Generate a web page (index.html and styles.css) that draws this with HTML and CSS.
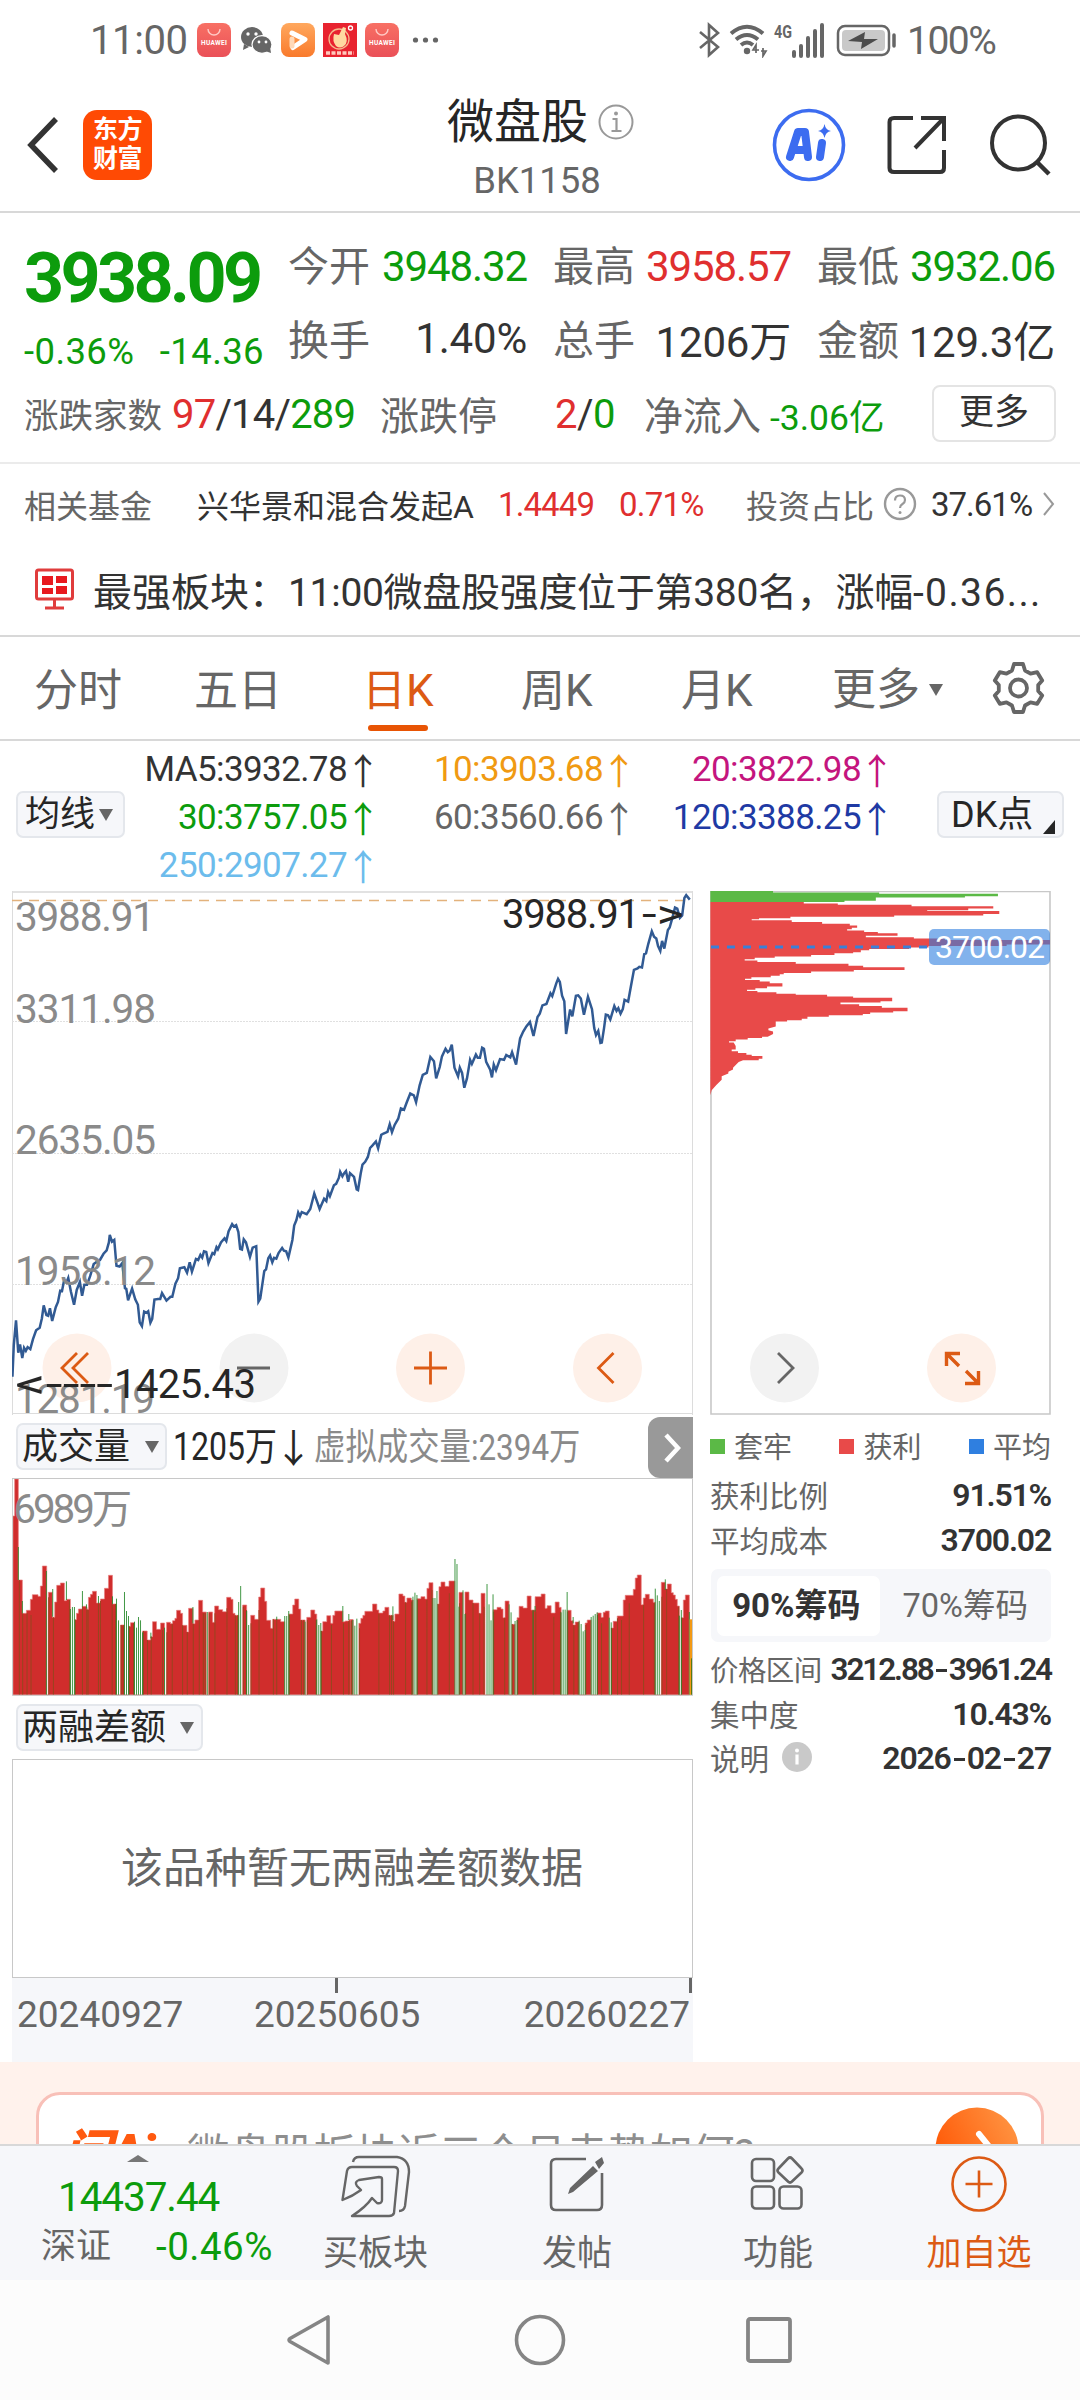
FILE: index.html
```html
<!DOCTYPE html>
<html lang="zh-CN">
<head>
<meta charset="utf-8">
<title>微盘股 BK1158</title>
<link rel="stylesheet" href="styles.css">
</head>
<body>
<div class="screen">

<div class="status">
  <span class="clock">11:00</span>
  <svg class="notif" width="242" height="36" viewBox="0 0 242 36">
    <defs>
      <linearGradient id="hw" x1="0" y1="0" x2="0" y2="1"><stop offset="0" stop-color="#f87064"/><stop offset="1" stop-color="#ea5058"/></linearGradient>
      <linearGradient id="vid" x1="0" y1="0" x2="0" y2="1"><stop offset="0" stop-color="#ffa85e"/><stop offset="1" stop-color="#f97a2c"/></linearGradient>
    </defs>
    <g id="hwapp"><rect x="0" y="1" width="34" height="34" rx="8" fill="url(#hw)"/><path d="M11 7a6 6 0 0 0 12 0" fill="none" stroke="#ffc9c4" stroke-width="1.4"/><text x="4" y="23" class="hwtxt" textLength="26">HUAWEI</text></g>
    <g fill="#666"><ellipse cx="55" cy="15" rx="11" ry="10"/><path d="M47 22l-1 6 6-3z"/></g>
    <g fill="#666" stroke="#fff" stroke-width="1.2"><ellipse cx="65" cy="22.500" rx="10" ry="8.800"/></g>
    <path d="M68 29l6 2-1-6z" fill="#666"/>
    <g fill="#fff"><circle cx="51" cy="12" r="1.700"/><circle cx="59" cy="12" r="1.700"/><circle cx="62" cy="20" r="1.400"/><circle cx="69" cy="20" r="1.400"/></g>
    <rect x="84" y="1" width="34" height="34" rx="8" fill="url(#vid)"/>
    <path d="M95 11L108 17.500 96 25.500" fill="none" stroke="#fff" stroke-width="5" stroke-linecap="round" stroke-linejoin="round"/>
    <path d="M95 17v7" stroke="#ffd9b8" stroke-width="5" stroke-linecap="round"/>
    <rect x="126" y="1" width="34" height="34" fill="#e8232f"/>
    <circle cx="142" cy="17" r="10" fill="none" stroke="#f5b98c" stroke-width="1.300"/>
    <path d="M137 12l5 1 4-8 3 1-1 6q4 8-1 12-4 3-8 0-4-5-2-12z" fill="#ffd9a0"/>
    <circle cx="153.500" cy="6" r="2" fill="none" stroke="#fff" stroke-width="1.300"/>
    <path d="M129 31h28" stroke="#ffc9bd" stroke-width="3.500" stroke-dasharray="4 1.500"/>
    <use href="#hwapp" x="168"/>
    <g fill="#666"><circle cx="218.500" cy="18" r="2.600"/><circle cx="228.500" cy="18" r="2.600"/><circle cx="238.500" cy="18" r="2.600"/></g>
  </svg>
  <svg class="signals" width="204" height="36" viewBox="0 0 204 36">
    <g fill="none" stroke="#666" stroke-width="2.600">
      <path d="M3 10l18 15-9 8V3l9 8L3 26"/>
      <path d="M34 11.500q16-13.500 32 0" stroke-width="4"/><path d="M39 17.500q11-9 22 0" stroke-width="4"/><path d="M44 23q6-5 12 0" stroke-width="4"/>
    </g>
    <circle cx="50" cy="29" r="3.200" fill="#666"/>
    <path d="M59 31v-8l-3 5h6M66 26v8l3-5h-5" fill="none" stroke="#666" stroke-width="1.700"/>
    <text x="77" y="16" class="g4" textLength="18" lengthAdjust="spacingAndGlyphs">4G</text>
    <path d="M97 34v-4M104 34V24M111 34V16M118 34V9M125 34V3" stroke="#666" stroke-width="4" stroke-linecap="round"/>
    <rect x="141" y="4" width="51" height="29" rx="7" fill="#fff" stroke="#666" stroke-width="2.500"/>
    <rect x="145" y="8" width="43" height="21" rx="4" fill="#c9c9c9"/>
    <path d="M151 19l17-9-1 7 14 0-17 10 1-7z" fill="#4c4c4c"/>
    <path d="M197 13v11" stroke="#666" stroke-width="3.500" stroke-linecap="round"/>
  </svg>
  <span class="pct">100%</span>
</div>

<header class="head">
  <svg class="back" width="32" height="56" viewBox="0 0 32 56"><path d="M29 2L4 28l25 26" fill="none" stroke="#333" stroke-width="5.500"/></svg>
  <div class="logo">东方<br>财富</div>
  <div class="title">
    <div class="name">微盘股<svg width="38" height="38" viewBox="0 0 38 38"><circle cx="19" cy="19" r="16.500" fill="none" stroke="#999" stroke-width="2"/><path d="M15.500 16h4v12m-5 0h10" fill="none" stroke="#999" stroke-width="2.200"/><circle cx="19" cy="10.500" r="2" fill="#999"/></svg></div>
    <div class="code">BK1158</div>
  </div>
  <svg class="ai" width="74" height="74" viewBox="0 0 74 74"><circle cx="37" cy="37" r="34.500" fill="none" stroke="#3c6cf0" stroke-width="3.600"/><path d="M18 49L26 24h7l3 25M21 42h13M50 35l-2 14" fill="none" stroke="#3c6cf0" stroke-width="8" stroke-linejoin="round" stroke-linecap="round"/><path d="M52.500 16q1 6 6.500 7-5.500 1-6.500 7-1-6-6.500-7 5.500-1 6.500-7z" fill="#3c6cf0"/></svg>
  <svg class="share" width="62" height="62" viewBox="0 0 62 62"><path d="M27 4H8q-4.500 0-4.500 4v46q0 4 4.500 4h46q4 0 4-4V36" fill="none" stroke="#333" stroke-width="4"/><path d="M35 4h23v23M58 4L29 34" fill="none" stroke="#333" stroke-width="4"/></svg>
  <svg class="search" width="62" height="62" viewBox="0 0 62 62"><circle cx="29.500" cy="29" r="26.500" fill="none" stroke="#333" stroke-width="4"/><path d="M48 48l12 12" stroke="#333" stroke-width="4.500"/></svg>
</header>

<section class="quote">
  <div class="price"><b>3938.09</b><div class="chg"><span>-0.36%</span><span>-14.36</span></div></div>
  <div class="grid">
    <div><i>今开</i><span class="gr">3948.32</span></div><div><i>最高</i><span class="rd">3958.57</span></div><div><i>最低</i><span class="gr">3932.06</span></div>
    <div class="w"><i>换手</i><span>1.40%</span></div><div class="w"><i>总手</i><span>1206万</span></div><div class="w"><i>金额</i><span>129.3亿</span></div>
  </div>
</section>
<section class="breadth">
  <i class="b1">涨跌家数</i><span class="b2"><em class="rd">97</em>/14/<em class="gr">289</em></span>
  <i class="b3">涨跌停</i><span class="b4"><em class="rd">2</em>/<em class="gr">0</em></span>
  <i class="b5">净流入</i><span class="b6 gr">-3.06亿</span><span class="more">更多</span>
</section>
<section class="fund">
  <span class="f1">相关基金</span><span class="f2">兴华景和混合发起A</span><span class="f3 rd">1.4449</span><span class="f4 rd">0.71%</span><span class="f5">投资占比</span>
  <svg class="f6" width="34" height="34" viewBox="0 0 34 34"><circle cx="17" cy="17" r="15" fill="none" stroke="#999" stroke-width="2.400"/><path d="M12 13.500q0-5 5-5t5 4.500q0 2.500-2.500 4T17 21" fill="none" stroke="#999" stroke-width="2.200"/><circle cx="17" cy="25.500" r="1.500" fill="#999"/></svg>
  <span class="f7">37.61%</span>
  <svg class="f8" width="12" height="24" viewBox="0 0 12 24"><path d="M1 1l9 11-9 11" fill="none" stroke="#999" stroke-width="2"/></svg>
</section>
<section class="news">
  <svg width="40" height="42" viewBox="0 0 40 42"><rect x="1.500" y="2" width="36" height="29" rx="2" fill="none" stroke="#e03c3c" stroke-width="3"/><path d="M7 8h11v9H7zM21 8h11v7H21zM7 20h11v6H7zM21 18h11v8H21z" fill="#e8191f"/><path d="M19.500 32v7M10 40h19" stroke="#e03c3c" stroke-width="3"/></svg>
  <span class="n1">最强板块：</span><span class="n2">11:00微盘股强度位于第380名，涨幅<em>-0.36...</em></span>
</section>

<nav class="tabs">
  <span>分时</span><span>五日</span><span class="on">日K</span><span>周K</span><span>月K</span><span class="mo">更多<s></s></span>
  <svg width="54" height="54" viewBox="0 0 54 54" fill="none" stroke="#666" stroke-width="3.800" stroke-linejoin="round"><path d="M22 3h9l2 6.500 5.500 3.200 6.700-1.500 5 8.300-4 4.500v6l4 4.500-5 8.300-6.700-1.500-5.500 3.200L31 51h-9l-2-6.500-5.500-3.200-6.700 1.500-5-8.300 4-4.500v-6l-4-4.500 5-8.300 6.700 1.500L20 9.500z"/><circle cx="26.500" cy="27" r="8.500"/></svg>
</nav>

<section class="ma">
  <span class="btn avg">均线<s></s></span>
  <div class="mas">
    <span>MA5:3932.78<u>↑</u></span><span class="c10">10:3903.68<u>↑</u></span><span class="c20">20:3822.98<u>↑</u></span>
    <span class="gr">30:3757.05<u>↑</u></span><span class="c60">60:3560.66<u>↑</u></span><span class="c120">120:3388.25<u>↑</u></span>
    <span class="c250">250:2907.27<u>↑</u></span>
  </div>
  <span class="btn dk">DK点<s></s></span>
</section>

<main class="charts">
  <div class="left">
    <svg class="kline" width="681" height="524" viewBox="0 0 681 524">
      <path d="M0 1H681" stroke="#e2e2e2" stroke-width="2"/><path d="M.5 0V524M680.500 0V524M0 522.500H681" stroke="#dcdcdc" fill="none"/>
      <path d="M0 130.500H680M0 262.500H680M0 393.500H680" stroke="#e0e0e0" stroke-dasharray="2 1"/>
      <path d="M0 9.500H680" stroke="#e3b27c" stroke-width="1.300" stroke-dasharray="10 7"/>
      <svg width="680" height="524" viewBox="27 32 1523 1521" preserveAspectRatio="none">
        <polyline fill="none" stroke="#315a93" stroke-width="2.500" vector-effect="non-scaling-stroke" points="28,1442 31,1350 36,1278 41,1372 45,1348 50,1388 54,1358 58,1367 62,1356 68,1362 74,1333 81,1307 89,1300 94,1272 98,1235 104,1263 108,1265 112,1243 117,1280 125,1240 130,1225 135,1192 139,1193 144,1160 149,1168 153,1155 159,1195 166,1233 172,1190 179,1167 184,1207 189,1175 195,1175 202,1150 210,1115 217,1108 224,1103 232,1085 239,1075 244,1052 246,1030 251,1050 256,1045 261,1120 268,1122 274,1112 280,1185 283,1187 287,1220 296,1186 303,1217 309,1233 313,1284 318,1295 323,1253 328,1256 332,1252 337,1285 341,1274 346,1218 354,1216 359,1216 363,1199 373,1221 382,1210 386,1210 393,1172 399,1156 403,1127 413,1124 419,1140 425,1110 430,1137 439,1100 444,1103 449,1088 453,1096 457,1078 462,1080 467,1112 476,1083 480,1086 485,1066 488,1072 495,1052 503,1040 507,1048 512,1020 520,999 524,1006 529,1002 534,1022 538,1071 542,1073 546,1043 551,1052 560,1094 566,1067 574,1063 579,1224 583,1215 592,1135 596,1130 601,1098 605,1090 610,1110 614,1097 619,1099 624,1083 632,1068 636,1076 641,1078 646,1096 655,1045 659,1003 664,987 668,965 672,976 676,964 687,970 695,955 704,910 716,955 726,925 731,932 735,906 739,918 748,886 753,882 759,865 762,847 767,860 771,851 775,845 780,876 784,851 793,862 799,898 802,900 808,852 812,826 818,818 824,804 829,778 834,771 842,759 847,779 854,740 859,736 868,731 873,709 878,732 884,711 892,693 898,663 905,667 911,646 919,620 927,625 932,645 940,596 947,566 956,560 964,514 972,526 977,576 985,543 990,512 998,490 1003,500 1007,496 1012,478 1018,545 1026,570 1030,545 1035,560 1040,603 1046,576 1053,522 1057,534 1066,507 1070,516 1075,516 1080,487 1084,490 1089,528 1098,551 1102,573 1106,536 1111,552 1120,520 1129,522 1134,508 1143,515 1147,500 1156,536 1160,500 1165,460 1172,440 1179,425 1187,412 1195,453 1204,398 1209,388 1215,364 1224,360 1233,329 1237,337 1246,300 1250,287 1254,296 1259,336 1264,352 1268,447 1277,376 1282,396 1290,336 1295,335 1301,344 1308,391 1317,339 1326,375 1331,430 1335,450 1340,438 1345,473 1348,472 1353,430 1357,391 1362,393 1367,405 1376,366 1381,380 1385,372 1390,388 1395,375 1399,348 1407,353 1413,310 1420,261 1428,257 1432,252 1438,254 1443,215 1447,213 1452,186 1460,149 1465,165 1470,170 1474,192 1479,206 1483,177 1488,199 1496,145 1500,138 1506,110 1512,80 1517,83 1523,110 1528,103 1533,52 1537,44 1545,57"/>
      </svg>
      <g class="knob"><circle cx="65" cy="477" r="34.500" fill="#fef0e8"/><circle cx="242" cy="477" r="34.500" fill="#f2f2f2"/><circle cx="418.500" cy="477" r="34.500" fill="#fef0e8"/><circle cx="595.500" cy="477" r="34.500" fill="#fef0e8"/></g>
      <g class="axis"><text x="3" y="40" textLength="140">3988.91</text><text x="3" y="132" textLength="141">3311.98</text><text x="3" y="263" textLength="141">2635.05</text><text x="3" y="394" textLength="141">1958.12</text><text x="3" y="522" textLength="140">1281.19</text></g>
      <path d="M65 462L50 477l15 15M76 462L61 477l15 15M402 477h33M418.500 460.500v33M601.500 462l-15 15 15 15" fill="none" stroke="#dc5a14" stroke-width="2.800"/>
      <path d="M225 477h33" stroke="#666" stroke-width="3"/>
      <g class="mark"><text x="490" y="37" textLength="138">3988.91</text><text x="630" y="37" textLength="42" lengthAdjust="spacingAndGlyphs">-&gt;</text><text x="3" y="507" textLength="98" lengthAdjust="spacingAndGlyphs">&lt;----</text><text x="102" y="507" textLength="142">1425.43</text></g>
    </svg>

    <div class="volhead"><span class="btn vol">成交量<s></s></span><span class="v1">1205万</span><span class="v1a">↓</span><span class="v2">虚拟成交量:2394万</span>
      <span class="fold"><svg width="18" height="32" viewBox="0 0 18 32"><path d="M3 3l12 13L3 29" fill="none" stroke="#fff" stroke-width="4.500"/></svg></span></div>

    <svg class="volume" width="681" height="218" viewBox="12 24 2040 654" preserveAspectRatio="none">
      <g>
        <path fill="#d02d2c" stroke="#e88080" stroke-width="2" d="M15 675V138H20V27H31V330H43V430H55V421H67V388H73V374H90V379H97V348H103V288H116V675H121V367H133V442H140V396H146V346H157V339H169V392H175V388H187V675H200V449H205V430H211V417H223V409H235V418H241V382H247V373H253V364H265V399H277V387H289V355H301V316H313V402H325V675H337V465H349V675H361V469H367V458H379V675H403V483H417V510H428V500H433V455H445V478H457V459H469V675H475V457H487V461H493V452H500V445H505V421H517V430H523V466H536V486H541V415H554V461H560V450H571V391H583V426H594V675H601V426H613V457H619V408H631V419H643V425H655V382H668V388H674V430H680V436H691V675H703V405H715V675H727V436H739V448H751V381H757V354H769V394H775V451H787V475H793V448H817V455H829V675H841V432H853V405H859V387H871V417H877V450H890V675H895V442H907V420H919V432H925V675H937V483H943V455H955V437H967V460H973V436H979V423H1003V455H1010V453H1021V449H1034V675Z"/>
        <path stroke="#98451f" stroke-width="3" fill="none" d="M34 330V675M44 430V675M57 430V675M69 435V675M122 382V675M136 442V675M184 390V675M202 449V675M223 409V675M236 412V675M240 420V675M271 400V675M277 393V675M312 402V675M322 402V675M339 465V675M345 465V675M363 469V675M376 460V675M406 483V675M418 510V675M429 500V675M463 480V675M476 487V675M492 461V675M523 466V675M537 486V675M555 461V675M573 450V675M585 430V675M591 430V675M603 430V675M620 430V675M656 415V675M681 436V675M688 436V675M705 410V675M714 420V675M728 460V675M752 420V675M795 448V675M805 448V675M843 435V675M879 450V675M886 450V675M897 450V675M923 450V675M939 483V675M969 465V675M1005 460V675M1021 453V675"/>
        <path stroke="#25882a" stroke-width="2.600" fill="none" d="M31 231V330M43 393V430M115 303V675M134 357V440M175 334V390M187 417V675M193 411V675M199 411V675M223 363V410M235 403V415M271 378V400M313 379V402M325 386V675M331 451V675M349 366V675M355 423V675M361 438V675M379 455V675M385 473V675M391 441V675M397 451V675M403 487V675M428 488V505M469 473V675M554 411V460M597 426V675M691 396V675M697 348V675M715 423V675M721 465V675M805 440V450M829 438V675M835 438V675M841 423V675M890 455V675M925 448V675M931 465V675M937 459V675M1003 408V455M1021 432V450"/>
      </g>
      <g transform="translate(1026)">
        <path fill="#d02d2c" stroke="#e88080" stroke-width="2" d="M0 675V449H7V675H25V460H31V445H37V436H43V424H66V402H79V420H85V429H97V423H103V412H115V436H128V454H133V432H145V372H157V378H163V397H169V384H182V390H188V675H199V386H211V380H223V387H229V355H235V338H247V675H261V402H265V350H271V336H283V349H295V333H313V675H325V367H337V675H343V366H355V390H367V399H385V430H391V370H403V675H427V419H439V412H451V417H457V443H463V393H475V675H483V463H493V675H499V443H505V409H517V414H529V378H541V420H553V380H571V372H583V415H589V407H601V429H613V396H625V412H631V675H649V421H661V452H667V465H673V456H685V675H703V459H709V450H721V675H739V429H751V442H757V427H763V423H775V675H781V474H787V454H799V438H817V390H823V376H847V358H853V324H859V315H871V404H877V384H883V373H895V387H907V397H913V675H931V337H943V357H949V342H961V368H967V375H973V388H979V408H985V675H991V443H997V390H1003V375H1015V675Z"/>
        <path stroke="#98451f" stroke-width="3" fill="none" d="M2 452V675M27 475V675M85 432V675M117 436V675M123 436V675M129 454V675M165 397V675M183 395V675M201 390V675M229 390V675M244 360V675M262 402V675M296 370V675M327 400V675M345 430V675M367 399V675M387 430V675M400 410V675M429 425V675M462 443V675M485 463V675M501 450V675M547 422V675M555 425V675M609 440V675M629 425V675M651 425V675M669 465V675M682 456V675M705 465V675M740 435V675M752 460V675M782 474V675M800 445V675M812 450V675M835 400V675M878 404V675M910 400V675M933 380V675M947 357V675M983 410V675M992 443V675"/>
        <path stroke="#25882a" stroke-width="2.600" fill="none" d="M7 450V675M13 467V675M19 446V675M127 409V450M187 380V675M193 368V675M199 375V675M247 384V675M253 384V675M259 363V675M313 267V675M319 282V675M325 410V675M337 361V675M343 432V675M409 342V675M415 403V675M421 451V675M427 373V675M475 403V675M481 427V675M493 453V675M499 450V675M553 408V425M547 420V675M631 427V675M637 419V675M643 419V675M649 366V675M667 441V460M685 452V675M691 462V675M697 484V675M703 480V675M721 441V675M727 437V675M733 432V675M739 427V675M775 443V675M781 457V675M913 356V675M919 376V675M925 393V675M943 328V360M985 437V675M991 420V675M1015 426V675"/>
        <path d="M1016 448H1026V675H1016z" fill="#f39a14"/><path d="M1022 565V675" stroke="#5a7a10" stroke-width="4"/>
      </g>
      <path d="M13 25.500H2050.500V676H13.500Z" fill="none" stroke="#c8c8c8" stroke-width="3"/>
      <text class="vlab" x="16" y="159" textLength="356">6989万</text>
    </svg>

    <div class="lrhead"><span class="btn lr">两融差额<s></s></span></div>
    <div class="empty">该品种暂无两融差额数据</div>
    <div class="dates"><span>20240927</span><span>20250605</span><span>20260227</span></div>
  </div>

  <div class="right">
    <svg class="chips" width="341" height="524" viewBox="0 0 341 524">
      <path d="M1 .5H340V523H1Z" fill="none" stroke="#c8c8c8" stroke-width="1.600"/>
      <svg width="341" height="524" viewBox="61 32 1022 1521" preserveAspectRatio="none">
        <path fill="#5bb946" d="M62 32H250V36H568V40H924V47H825V51H558V60H464V64H62Z"/>
        <path fill="#e84a49" d="M62 64H342V68H444V72H665V76H910V83H835V88H712V90H928V99H880V103H613V107H302V111H208V114H186V117H306V122H397V127H480V132H502V139H486V143H472V147H523V151H564V155H623V162H528V166H672V170H765V174H1080V187H950V192H716V196H658V200H538V204H513V210H490V213H434V218H364V222H255V226H195V230H165V234H203V238H318V243H476V249H520V253H644V261H492V266H364V270H282V274H270V278H243V282H185V287H166V290H210V295H240V300H278V309H232V314H197V319H172V322H203V326H260V330H318V333H412V338H490V342H607V352H572V356H452V361H508V366H576V371H653V381H610V385H541V389H519V393H417V397H353V403H336V407H292V411H258V425L236 431V436L250 440V447L234 455H217V459H174V463H138V468H118V472H132L138 482V492H126V497H145V502H170V507H186V511H218V519H207V523H160L147 528 130 545V550L116 557V562L96 570V580L80 595 66 610 62 625Z"/>
      </svg>
      <path d="M1 56H220" stroke="#3a80d8" stroke-width="3" stroke-dasharray="8 8"/>
      <rect x="219" y="38" width="121" height="36" rx="5" fill="#2f7fe0" fill-opacity=".6"/>
      <text class="avgp" x="225" y="66.500" textLength="110">3700.02</text>
      <circle cx="74.500" cy="477" r="34.500" fill="#f2f2f2"/><path d="M68 462l15 15-15 15" fill="none" stroke="#666" stroke-width="2.800"/>
      <circle cx="251.500" cy="477" r="34.500" fill="#fef0e8"/><path d="M250 462.500h-13.500V475M237 463l12 12M255 492.500h13.500V480M268 492l-12-12" fill="none" stroke="#dc5a14" stroke-width="3.400"/>
    </svg>
    <div class="legend"><span><s class="lg"></s>套牢</span><span><s class="lred"></s>获利</span><span><s class="lb"></s>平均</span></div>
    <div class="row r1"><i>获利比例</i><b>91.51%</b></div>
    <div class="row"><i>平均成本</i><b>3700.02</b></div>
    <div class="toggle"><span class="sel">90%筹码</span><span>70%筹码</span></div>
    <div class="row"><i class="tight">价格区间</i><b class="range">3212.88<q></q>3961.24</b></div>
    <div class="row"><i>集中度</i><b>10.43%</b></div>
    <div class="row"><i>说明<svg width="30" height="30" viewBox="0 0 30 30"><circle cx="15" cy="15" r="15" fill="#c9c9c9"/><path d="M15 12.500v10" stroke="#fff" stroke-width="3.200"/><circle cx="15" cy="8.500" r="2" fill="#fff"/></svg></i><b>2026<q></q>02<q></q>27</b></div>
  </div>
</main>

<section class="ask"><div class="askbox"><span class="asklogo">问Ai</span><span class="askq">微盘股板块近三个月走势如何?</span><svg width="84" height="84" viewBox="0 0 84 84"><defs><linearGradient id="og" x1="0" y1=".5" x2="1" y2="0"><stop offset="0" stop-color="#ff5a08"/><stop offset="1" stop-color="#ff9a48"/></linearGradient></defs><circle cx="42" cy="42" r="41.500" fill="url(#og)"/><path d="M44 27l13 16-13 15M26 43h30" fill="none" stroke="#fff" stroke-width="6" stroke-linecap="round"/></svg></div></section>

<footer class="bottom">
  <div class="index"><s></s><div class="ip gr">14437.44</div><div class="ic"><span>深证</span><span class="gr">-0.46%</span></div></div>
  <div class="act a1"><svg width="70" height="63" viewBox="0 0 70 63" fill="none" stroke="#666" stroke-width="2.400" stroke-linejoin="round"><path d="M12 7q1-5 6-5h38q12 2 12 15l-4 34q-1 5-6 5"/><path d="M1.500 45L6 16q1-4 5-4h42q4 0 4 4l-4 42q-1 3-5 3H11q14-9 20-18l5 5q5 1 5-3V24q0-2-3-2l-20 3q-5 2-2 6l4 4q-8 6-18.500 10z"/></svg>买板块</div>
  <div class="act a2"><svg width="58" height="58" viewBox="0 0 58 58" fill="none" stroke="#666"><path d="M38 3H8Q3 3 3 8v41q0 5 5 5h41q5 0 5-5V17" stroke-width="2.600"/><path d="M47 6l7-5 2 6-5 6zM45 10l5 5-25 21-5 2 2-6z" fill="#666" stroke="none"/></svg>发帖</div>
  <div class="act a3"><svg width="56" height="56" viewBox="0 0 56 56" fill="none" stroke="#666" stroke-width="2.600"><rect x="2" y="3" width="22" height="22" rx="4"/><path d="M38 2.500q2-2 4 0l9.500 10q2 2 0 4l-9.500 9q-2 2-4 0l-9.500-9q-2-2 0-4z"/><rect x="2" y="30.500" width="22" height="22" rx="4"/><rect x="29.500" y="30.500" width="22" height="22" rx="4"/></svg>功能</div>
  <div class="act a4"><svg width="58" height="58" viewBox="0 0 58 58" fill="none" stroke="#dc5a14" stroke-width="2.600"><circle cx="29" cy="29" r="26.500"/><path d="M29 15.500v27M15.500 29h27"/></svg>加自选</div>
</footer>

<div class="sysnav">
  <svg width="46" height="54" viewBox="0 0 46 54"><path d="M42 4v46L4 28.500q-2-1.500 0-3z" fill="none" stroke="#858585" stroke-width="3.600" stroke-linejoin="round"/></svg>
  <svg width="52" height="52" viewBox="0 0 52 52"><circle cx="26" cy="26" r="23.500" fill="none" stroke="#858585" stroke-width="3.600"/></svg>
  <svg width="48" height="48" viewBox="0 0 48 48"><rect x="3" y="3" width="42" height="42" rx="2" fill="none" stroke="#858585" stroke-width="3.800"/></svg>
</div>

</div>
</body>
</html>
```
FILE: styles.css
```css
* { box-sizing: border-box; }
body { margin: 0; background: #fff; font-family: Roboto, "Noto Sans CJK SC", sans-serif; color: #333; }
i, em { font-style: normal; }
s, u { text-decoration: none; }
svg { display: block; flex: none; }
.screen { width: 1080px; height: 2400px; overflow: hidden; display: flex; flex-direction: column; background: #fff; white-space: nowrap; }
.screen > * { flex: none; }
.gr { color: #0c9c0c; }
.rd { color: #e02f2f; }

.status { height: 76px; display: flex; align-items: center; padding: 3px 0 0 90px; color: #666; font-size: 40px; }
.clock { width: 107px; flex: none; letter-spacing: -.4px; margin-top: 2px; }
.signals { margin-left: 258px; }
.pct { margin: 3px 0 0 6px; font-size: 39px; letter-spacing: -1.500px; }
.hwtxt { font: 700 6.500px Roboto, sans-serif; fill: #fff; }
.g4 { font: 700 18px Roboto, sans-serif; fill: #666; }

.head { height: 137px; border-bottom: 2px solid #d8d8d8; display: flex; align-items: center; padding: 2px 0 0 27px; }
.logo { margin-left: 24px; width: 69px; height: 70px; border-radius: 14px; background: #ff4a04; color: #fff; font-weight: 700; font-size: 25px; line-height: 29px; padding-top: 5px; text-align: center; letter-spacing: -.5px; flex: none; }
.title { display: flex; flex-direction: column; align-items: center; margin-left: 216px; width: 338px; flex: none; }
.name { display: flex; align-items: center; font-size: 47px; line-height: 60px; gap: 9px; color: #262626; margin-left: 8px; margin-top: 5px; }
.code { font-size: 36.500px; line-height: 42px; color: #666; margin: 8px 0 0 0; }
.ai { margin-left: 66px; }
.share { margin-left: 40px; }
.search { margin-left: 41px; }

.quote { height: 165px; display: flex; }
.price { width: 288px; padding: 30px 0 0 24px; color: #0c9c0c; flex: none; }
.price b { display: block; font-size: 70px; line-height: 70px; letter-spacing: -3.700px; font-weight: 700; }
.chg { display: flex; justify-content: space-between; width: 240px; font-size: 36.500px; line-height: 40px; letter-spacing: .4px; margin-top: 19px; }
.grid { width: 767px; padding-top: 16px; display: grid; grid-template-columns: 239px 238px 238px; column-gap: 26px; grid-auto-rows: 74px; }
.grid div { display: flex; justify-content: space-between; align-items: center; font-size: 42px; letter-spacing: -1.100px; }
.grid .w { letter-spacing: -.2px; }
.grid .w span { margin-top: -3px; }
.grid i { font-size: 41px; letter-spacing: 0; color: #666; margin-top: -6px; }
.breadth { height: 86px; border-bottom: 2px solid #ebebeb; display: flex; align-items: center; padding: 0 24px 12px 24px; font-size: 40px; color: #333; }
.breadth i { color: #666; margin-top: -2px; }
.b1 { font-size: 34.500px; width: 148px; }
.b2 { letter-spacing: -.8px; width: 208px; }
.b3 { font-size: 39px; width: 175px; }
.b4 { width: 89px; letter-spacing: -.5px; }
.b5 { font-size: 39px; width: 126px; }
.b6 { font-size: 35.500px; letter-spacing: 0; }
.more { margin: -2px 0 0 auto; width: 124px; height: 57px; border: 2px solid #e4e4e4; border-radius: 8px; font-size: 35px; line-height: 52px; text-align: center; }

.fund { height: 80px; display: flex; align-items: center; padding-left: 24px; font-size: 32px; }
.f1, .f5 { color: #666; }
.f1 { width: 173px; } .f2 { width: 301px; } .f3 { width: 121px; font-size: 33px; letter-spacing: -.9px; } .f4 { width: 127px; font-size: 33px; letter-spacing: -.8px; } .f5 { width: 137px; }
.f7 { margin-left: 14px; width: 112px; font-size: 33px; letter-spacing: -1px; }
.news { height: 93px; border-bottom: 2px solid #d8d8d8; display: flex; align-items: center; padding: 0 0 2px 35px; font-size: 39px; }
.n1 { margin-left: 18px; width: 195px; }
.n2 { letter-spacing: -.3px; }
.n2 em { letter-spacing: 1.400px; }

.tabs { height: 104px; border-bottom: 2px solid #d8d8d8; display: flex; align-items: center; padding-left: 34px; font-size: 44px; color: #666; }
.tabs span { height: 102px; line-height: 108px; width: 163px; flex: none; }
.tabs span:nth-child(1) { width: 160px; }
.tabs span:nth-child(2) { width: 168px; }
.tabs span:nth-child(3) { width: 159px; }
.tabs .on { color: #dc5a14; display: flex; flex-direction: column; }
.tabs .on::after { content: ""; width: 60px; height: 6px; border-radius: 3px; background: #e85404; margin: -20px 0 0 6px; flex: none; }
.tabs span:nth-child(4) { width: 160px; }
.tabs span:nth-child(5) { width: 151px; }
.tabs .mo { display: flex; align-items: center; width: 160px; gap: 9px; padding-top: 3px; }
s { display: inline-block; }
.mo s, .avg s, .vol s, .lr s { width: 0; height: 0; border: 7px solid transparent; border-bottom: 0; border-top: 12px solid #666; }

.ma { height: 150px; display: flex; align-items: flex-start; padding-left: 16px; }
.btn { border: 2px solid #e4e7ec; border-radius: 7px; background: #f6f7fa; height: 47px; display: flex; align-items: center; line-height: 40px; font-size: 36px; color: #262626; flex: none; }
.avg { width: 109px; margin-top: 50px; padding-left: 7px; gap: 4px; font-size: 35px; }
.mas { width: 763px; padding-top: 4px; display: grid; grid-template-columns: 250px 256px 258px; grid-auto-rows: 48px; font-size: 35px; letter-spacing: -.6px; text-align: right; }
.mas span { display: flex; justify-content: flex-end; align-items: center; }
.mas u { font-family: "Noto Sans CJK SC", sans-serif; font-size: 36px; width: 28px; letter-spacing: 0; line-height: 40px; text-indent: 0; text-align: left; margin-left: -2px; margin-right: 2px; }
.c10 { color: #f09a12; } .c20 { color: #c4157e; } .c60 { color: #666; } .c120 { color: #1f3aa4; } .c250 { color: #6cbcec; }
.dk { width: 127px; margin: 50px 0 0 49px; padding-left: 12px; }
.dk s { border: 7px solid transparent; border-right-color: #262626; border-bottom-color: #262626; border-width: 7px 6px; margin: 24px 0 0 10px; }

.charts { height: 1171px; display: flex; padding-left: 12px; }
.left { width: 681px; flex: none; }
.axis { font-size: 40.500px; fill: #8a8a8a; }
.mark { font-size: 40px; fill: #262626; }
.volhead { height: 63px; display: flex; padding: 8px 0 0 4px; }
.vol { width: 151px; padding-left: 4px; gap: 15px; }
.v1, .v1a, .v2 { font-size: 39px; line-height: 49px; color: #262626; transform: scaleX(.82); transform-origin: 0 50%; flex: none; }
.v1 { margin-left: 6px; width: 101px; }
.v1a { width: 40px; font-family: "Noto Sans CJK SC", sans-serif; line-height: 45px; transform: none; }
.v2 { width: 320px; font-size: 37px; color: #8a8a8a; transform: scaleX(.848); }
.fold { width: 45px; height: 61px; margin: -6px 0 0 auto; background: #999; border-radius: 12px 0 0 12px; display: flex; align-items: center; padding-left: 15px; flex: none; }
.vlab { font-size: 121px; fill: #8a8a8a; }
.lrhead { height: 63px; padding: 8px 0 0 4px; }
.lr { width: 187px; padding-left: 4px; gap: 14px; }
.empty { height: 219px; border: 1.500px solid #c8c8c8; font-size: 42px; line-height: 218px; padding-left: 108px; color: #666; }
.dates { height: 85px; background: linear-gradient(#666, #666) 323px 0 / 3px 15px no-repeat, linear-gradient(#666, #666) 677px 0 / 3px 15px no-repeat, #f6f7fa; display: flex; padding: 16px 3px 0 5px; font-size: 37px; line-height: 42px; color: #666; }
.dates span { width: 237px; }
.dates span:last-child { width: auto; margin-left: auto; }

.right { width: 341px; margin-left: 17px; }
.avgp { font-size: 32px; fill: #fff; }
.legend { display: flex; justify-content: space-between; height: 58px; align-items: center; padding-top: 1px; font-size: 29px; color: #666; }
.legend span { display: flex; align-items: center; gap: 9px; }
.legend s { width: 15px; height: 15px; margin-top: 3px; }
.lg { background: #5bb946; } .lred { background: #e84a49; } .lb { background: #2f7fe0; }
.row { display: flex; justify-content: space-between; align-items: center; height: 44.500px; font-size: 29.500px; color: #666; }
.row i { display: flex; align-items: center; gap: 13px; margin-top: -2px; }
.row .tight { font-size: 28.500px; letter-spacing: -.6px; }
.row b { font-weight: 600; font-size: 32px; letter-spacing: -1.200px; color: #333; display: flex; align-items: center; }
.row .range { letter-spacing: -2.100px; font-size: 31.500px; }
.row q { quotes: none; width: 11px; height: 3px; background: #333; margin: 2px 2px 0 3px; flex: none; }
.row q::before, .row q::after { content: none; }
.toggle { margin: 7px 0 5px 1px; height: 73px; background: #f6f7fa; border-radius: 7px; display: flex; align-items: center; padding-left: 6px; font-size: 32.500px; color: #666; }
.toggle span { width: 172px; height: 60px; line-height: 60px; text-align: center; border-radius: 7px; }
.toggle .sel { width: 163px; padding-right: 4px; background: #fff; font-weight: 700; font-size: 33px; color: #333; }

.ask { height: 82px; background: #fff2ec; overflow: hidden; padding: 30px 36px 0; }
.askbox { height: 120px; border: 3px solid #f8c0b8; border-radius: 24px; background: #fff; display: flex; align-items: flex-start; padding: 12px 22px 0 24px; }
.asklogo { width: 124px; font-size: 49px; line-height: 94px; font-weight: 900; font-style: italic; color: #ff5a10; letter-spacing: -1px; }
.askq { font-size: 42.300px; line-height: 96px; letter-spacing: -.2px; color: #8e8e8e; flex: 1; }

.bottom { height: 136px; background: #f6f7fa; border-top: 2px solid #d8d8d8; display: flex; color: #666; font-size: 35px; }
.index { width: 298px; display: flex; flex-direction: column; align-items: flex-start; padding-top: 9px; flex: none; }
.index > s { margin-left: 127px; border: 11px solid transparent; border-top: 0; border-bottom: 7px solid #777; }
.ip { font-size: 40.500px; line-height: 44px; margin: 13px 0 0 58px; letter-spacing: -1.100px; }
.ic { display: flex; margin: 2px 0 0 41px; line-height: 52px; gap: 45px; font-size: 35px; }
.ic .gr { font-size: 38.500px; letter-spacing: .5px; }
.act { display: flex; flex-direction: column; align-items: center; padding-top: 9px; line-height: 64px; flex: none; }
.act svg { margin-bottom: 7px; }
.a1 { width: 155px; } .a1 svg { margin-bottom: 4px; } .a2 { width: 248px; } .a2 svg, .a3 svg { margin-top: 1px; margin-bottom: 8px; } .a3 { width: 154px; } .a3 svg { margin-bottom: 10px; } .a4 { width: 248px; } .a4 svg { margin-bottom: 9px; }
.a4 { color: #dc5a14; }

.sysnav { height: 120px; background: #fcfcfc; display: flex; align-items: center; padding-left: 286px; }
.sysnav svg:nth-child(2) { margin-left: 182px; }
.sysnav svg:nth-child(3) { margin-left: 179px; }
```
